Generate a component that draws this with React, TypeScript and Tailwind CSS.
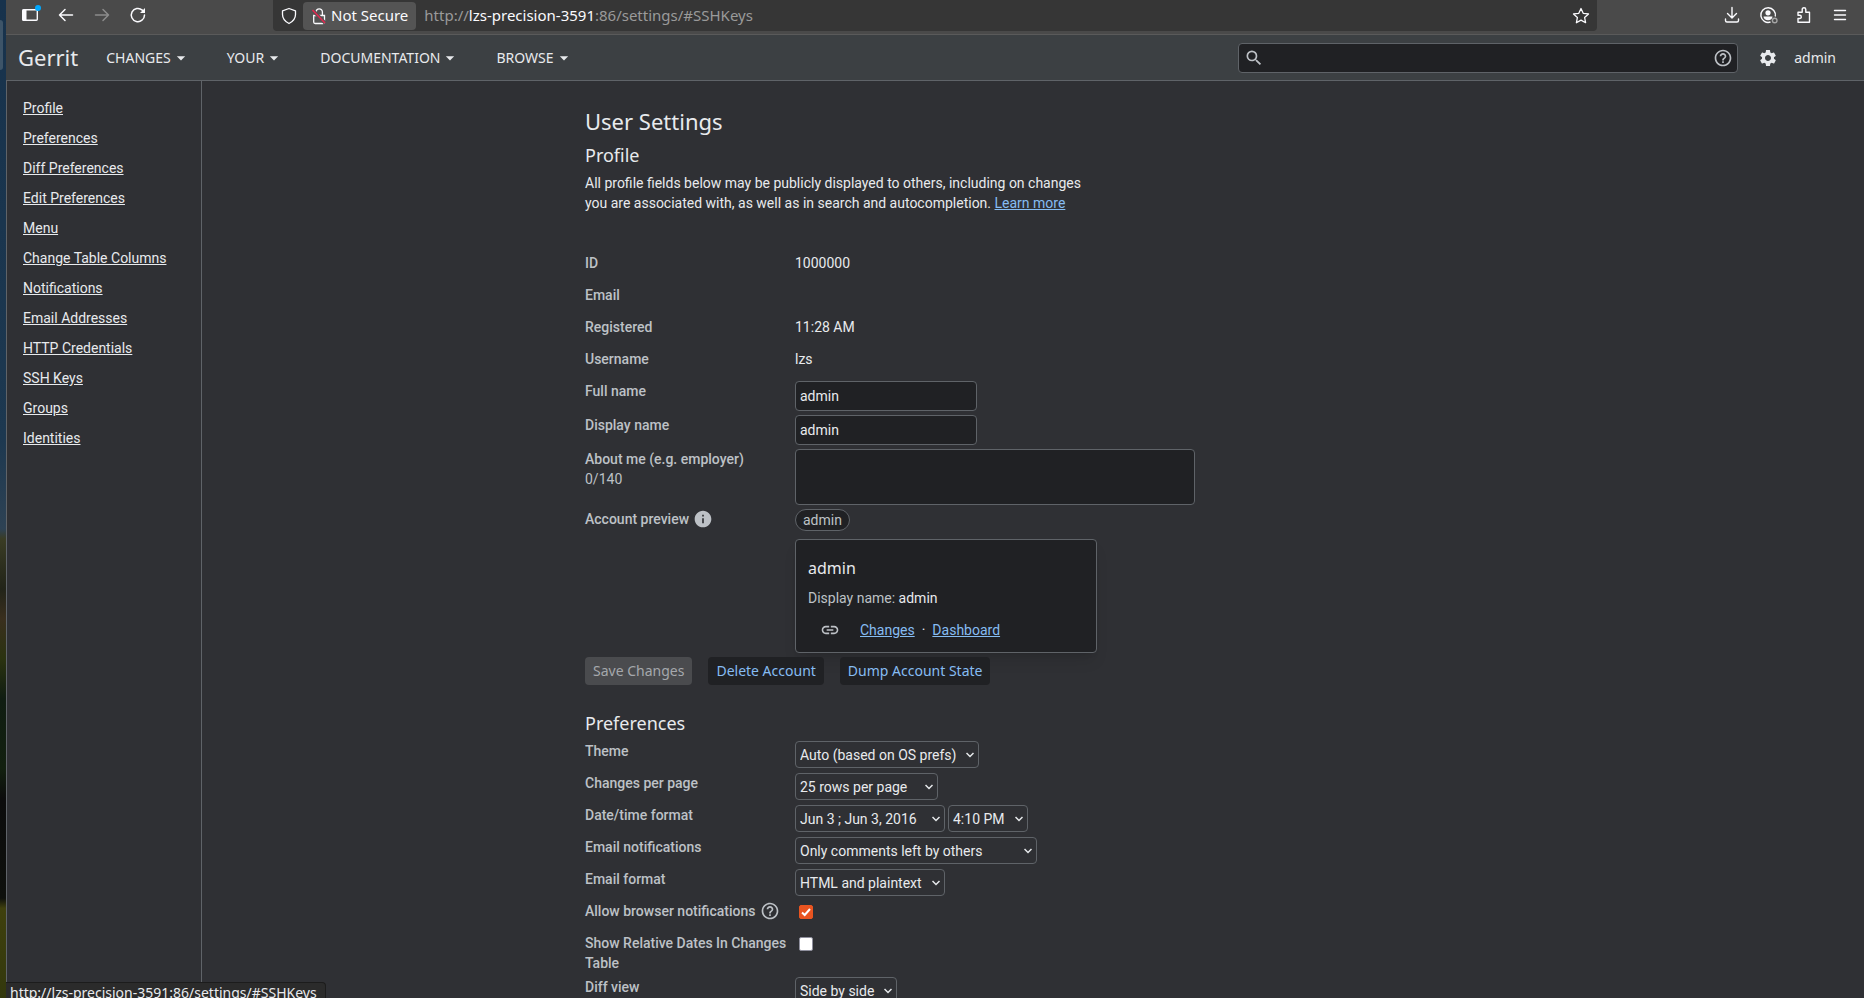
import type { ReactNode } from 'react';
import { MdArrowDropDown, MdHelpOutline, MdInfo, MdLink, MdSearch, MdSettings } from 'react-icons/md';

const SIDEBAR_LINKS = [
  'Profile',
  'Preferences',
  'Diff Preferences',
  'Edit Preferences',
  'Menu',
  'Change Table Columns',
  'Notifications',
  'Email Addresses',
  'HTTP Credentials',
  'SSH Keys',
  'Groups',
  'Identities'
];

const MENUS = ['CHANGES', 'YOUR', 'DOCUMENTATION', 'BROWSE'];

function BrowserBar() {
  return (
    <div className="flex h-[35px] items-start border-b border-[#5a5a5a] bg-[#4a4a4a] font-['Noto_Sans',sans-serif] text-[#fbfbfe]">
      <div className="flex h-[30px] w-[267px] items-center gap-3 pl-3">
        <button type="button" aria-label="Sidebar" className="relative h-6 w-6">
          <svg className="h-6 w-6" viewBox="0 0 24 24" fill="none" stroke="currentColor" strokeWidth="1.4">
            <rect x="4.700" y="6.700" width="14.600" height="10.600" rx="1" />
            <path d="M4.500 6.500h4v11h-4z" fill="currentColor" stroke="none" />
          </svg>
          <span className="absolute top-[2px] right-[1px] h-[6px] w-[6px] rounded-full bg-[#00a8ff]" />
        </button>
        <button type="button" aria-label="Back">
          <svg className="h-6 w-6" viewBox="0 0 24 24" fill="none" stroke="currentColor" strokeWidth="1.5" strokeLinecap="round" strokeLinejoin="round">
            <path d="M18.500 12H5.500M11 6.500L5.500 12l5.500 5.500" />
          </svg>
        </button>
        <button type="button" aria-label="Forward" className="text-[#8c8c8c]">
          <svg className="h-6 w-6" viewBox="0 0 24 24" fill="none" stroke="currentColor" strokeWidth="1.5" strokeLinecap="round" strokeLinejoin="round">
            <path d="M5.500 12h13M13 6.500l5.500 5.500-5.500 5.500" />
          </svg>
        </button>
        <button type="button" aria-label="Reload">
          <svg className="h-6 w-6" viewBox="0 0 24 24" fill="none" stroke="currentColor" strokeWidth="1.5" strokeLinecap="round">
            <path d="M18.500 12a6.600 6.600 0 1 1-2.200-4.900l1.200 1.200" />
            <path d="M19 5v5h-5z" fill="currentColor" stroke="none" />
          </svg>
        </button>
      </div>

      <div className="flex h-[31px] flex-1 items-center rounded-b-sm bg-[#363636] px-1">
        <svg className="h-6 w-6" viewBox="0 0 24 24" fill="none" stroke="currentColor" strokeWidth="1.300" strokeLinejoin="round">
          <path d="M12 4.500l6.500 2.300v3.700c0 4-2.500 7-6.500 9-4-2-6.500-5-6.500-9V6.800z" />
        </svg>
        <button type="button" className="ml-[2px] flex h-7 items-center gap-1 rounded-sm bg-[#545454] px-2 text-[15px]">
          <svg className="h-[18px] w-4" viewBox="0 0 16 18" fill="none" stroke="currentColor" strokeWidth="1.300">
            <path d="M5 8.500V5a3.200 3.200 0 0 1 6.400 0v3.500" />
            <path d="M2.700 8.500h10.800v6.500a1.500 1.500 0 0 1-1.500 1.500H4.200a1.500 1.500 0 0 1-1.500-1.500z" />
            <path d="M1.500 3l12.500 13" stroke="#545454" strokeWidth="3.500" />
            <path d="M1.500 3l12.500 13" stroke="#e22850" strokeWidth="1.600" />
          </svg>
          Not Secure
        </button>
        <p className="ml-2 flex-1 text-[15px] text-[#9a9a9a]">
          http://<span className="text-[#fbfbfe]">lzs-precision-3591</span>:86/settings/#SSHKeys
        </p>
        <button type="button" aria-label="Bookmark">
          <svg className="h-6 w-6" viewBox="0 0 24 24" fill="none" stroke="currentColor" strokeWidth="1.300" strokeLinejoin="round">
            <path d="M12 4.500l2.200 4.800 5.300.6-3.900 3.600 1 5.200-4.600-2.600-4.600 2.600 1-5.200-3.900-3.600 5.300-.6z" />
          </svg>
        </button>
      </div>

      <div className="flex h-[30px] w-[267px] items-center justify-end gap-3 pr-3">
        <button type="button" aria-label="Downloads">
          <svg className="h-6 w-6" viewBox="0 0 24 24" fill="none" stroke="currentColor" strokeWidth="1.400" strokeLinecap="round" strokeLinejoin="round">
            <path d="M12 4.500v10M7.500 10.500l4.500 4.500 4.500-4.500M5.500 16v1.500a1.500 1.500 0 0 0 1.500 1.500h10a1.500 1.500 0 0 0 1.500-1.500V16" />
          </svg>
        </button>
        <button type="button" aria-label="Account">
          <svg className="h-6 w-6" viewBox="0 0 24 24" fill="none" stroke="currentColor" strokeWidth="1.400">
            <path d="M14.500 19A7.300 7.300 0 1 1 19.300 13.500" />
            <circle cx="12" cy="9.800" r="2.600" fill="currentColor" stroke="none" />
            <path d="M7.500 13.500h9c0 2.300-2 3.700-4.500 3.700s-4.500-1.400-4.500-3.700z" fill="currentColor" stroke="none" />
            <circle cx="18.700" cy="17.500" r="2.300" stroke="#a5a5a5" />
          </svg>
        </button>
        <button type="button" aria-label="Extensions">
          <svg className="h-6 w-6" viewBox="0 0 24 24" fill="none" stroke="currentColor" strokeWidth="1.400" strokeLinejoin="round">
            <path d="M6 9.300h4.200V6.500a1.800 1.800 0 0 1 3.600 0v2.800h3.700v9.900H6v-3.700h1.700a1.600 1.600 0 0 0 0-3.200H6z" />
          </svg>
        </button>
        <button type="button" aria-label="Application menu">
          <svg className="h-6 w-6" viewBox="0 0 24 24" fill="none" stroke="currentColor" strokeWidth="1.400" strokeLinecap="round">
            <path d="M6.500 7.500h11M6.500 12h11M6.500 16.500h11" />
          </svg>
        </button>
      </div>
    </div>
  );
}

function GerritHeader() {
  return (
    <header className="flex h-[46px] items-center border-b border-[#5f6368] bg-[#3c4043] pr-7 pl-3 font-['Noto_Sans',sans-serif] text-sm">
      <a href="#home" className="mr-7 text-[22px]">
        Gerrit
      </a>
      <nav className="flex gap-9">
        {MENUS.map((menu) => (
          <button key={menu} type="button" className="flex items-center">
            {menu}
            <MdArrowDropDown className="h-5 w-5" />
          </button>
        ))}
      </nav>
      <div className="ml-auto flex h-[30px] w-[500px] items-center rounded-sm border border-[#5f6368] bg-[#202124] pr-1 pl-[5px] text-[#bdc1c6]">
        <MdSearch className="h-5 w-5" />
        <input aria-label="Search" className="min-w-0 flex-1 bg-transparent px-1 outline-none" />
        <MdHelpOutline className="h-5 w-5" />
      </div>
      <a href="#settings" aria-label="Settings" className="ml-5">
        <MdSettings className="h-5 w-5" />
      </a>
      <button type="button" className="ml-4">
        admin
      </button>
    </header>
  );
}

function Row({ label, htmlFor, children }: { label: ReactNode; htmlFor?: string; children?: ReactNode }) {
  return (
    <div className="mb-1 flex min-h-7 items-start">
      <label htmlFor={htmlFor} className="w-[210px] shrink-0 pr-1 font-medium text-[#bdc1c6]">
        {label}
      </label>
      {children}
    </div>
  );
}

function Select({ id, label, value, className }: { id?: string; label?: string; value: string; className: string }) {
  return (
    <div className={`relative ${className}`}>
      <select
        id={id}
        aria-label={label}
        className="block h-[27px] w-full appearance-none rounded-sm border border-[#5f6368] bg-transparent pl-1 outline-none"
      >
        <option>{value}</option>
      </select>
      <svg className="pointer-events-none absolute top-[10px] right-[5px] h-2 w-2" viewBox="0 0 8 8" fill="none" stroke="currentColor" strokeWidth="1.500">
        <path d="M.5 2L4 5.500 7.500 2" />
      </svg>
    </div>
  );
}

const fieldClass = 'h-[30px] w-[182px] rounded-sm border border-[#5f6368] bg-[#202124] px-1 outline-none';
const linkClass = 'text-[#86bcf2] underline';
const buttonClass = "h-7 rounded-sm px-2 font-['Noto_Sans',sans-serif]";

function ProfileSection() {
  return (
    <section>
      <h2 className="mb-1 font-['Noto_Sans',sans-serif] text-lg leading-7">Profile</h2>
      <p className="mb-10 max-w-[500px]">
        All profile fields below may be publicly displayed to others, including on changes you are associated with, as
        well as in search and autocompletion.{' '}
        <a href="#learn-more" className={linkClass}>
          Learn more
        </a>
      </p>
      <Row label="ID">1000000</Row>
      <Row label="Email" />
      <Row label="Registered">11:28 AM</Row>
      <Row label="Username">lzs</Row>
      <Row label="Full name" htmlFor="full-name">
        <input id="full-name" defaultValue="admin" className={fieldClass} />
      </Row>
      <Row label="Display name" htmlFor="display-name">
        <input id="display-name" defaultValue="admin" className={fieldClass} />
      </Row>
      <Row
        htmlFor="about-me"
        label={
          <>
            About me (e.g. employer)
            <span className="block font-normal">0/140</span>
          </>
        }
      >
        <textarea
          id="about-me"
          className="h-14 w-[400px] resize-none rounded-sm border border-[#5f6368] bg-[#202124] px-1 outline-none"
        />
      </Row>
      <Row
        label={
          <span className="flex items-center gap-1">
            Account preview <MdInfo className="h-5 w-5" />
          </span>
        }
      >
        <div>
          <span className="mb-2 flex h-[22px] w-fit items-center rounded-full border border-[#5f6368] bg-[#202124] px-[7px] text-[#bdc1c6]">
            admin
          </span>
          <div className="h-[114px] w-[302px] rounded-sm border border-[#5f6368] bg-[#202124] px-3 pt-4 shadow-lg">
            <h3 className="font-['Noto_Sans',sans-serif] text-base">admin</h3>
            <p className="mt-2">
              <span className="text-[#bdc1c6]">Display name:</span> admin
            </p>
            <p className="mt-3 flex items-center pl-3">
              <MdLink className="mr-5 h-5 w-5 text-[#bdc1c6]" />
              <a href="#changes" className={linkClass}>
                Changes
              </a>
              <span className="mx-[7px]">·</span>
              <a href="#dashboard" className={linkClass}>
                Dashboard
              </a>
            </p>
          </div>
        </div>
      </Row>
      <div className="flex gap-4">
        <button type="button" disabled className={`${buttonClass} bg-[#4a4b4e] text-[#a5a8ac]`}>
          Save Changes
        </button>
        <button type="button" className={`${buttonClass} bg-[#202124] text-[#86bcf2]`}>
          Delete Account
        </button>
        <button type="button" className={`${buttonClass} bg-[#202124] text-[#86bcf2]`}>
          Dump Account State
        </button>
      </div>
    </section>
  );
}

function PreferencesSection() {
  return (
    <section className="mt-6">
      <h2 className="mb-1 font-['Noto_Sans',sans-serif] text-lg leading-7">Preferences</h2>
      <Row label="Theme" htmlFor="theme">
        <Select id="theme" value="Auto (based on OS prefs)" className="w-[184px]" />
      </Row>
      <Row label="Changes per page" htmlFor="per-page">
        <Select id="per-page" value="25 rows per page" className="w-[143px]" />
      </Row>
      <Row label="Date/time format" htmlFor="date-format">
        <div className="flex gap-[3px]">
          <Select id="date-format" value="Jun 3 ; Jun 3, 2016" className="w-[150px]" />
          <Select label="Time format" value="4:10 PM" className="w-20" />
        </div>
      </Row>
      <Row label="Email notifications" htmlFor="email-notifications">
        <Select id="email-notifications" value="Only comments left by others" className="w-[242px]" />
      </Row>
      <Row label="Email format" htmlFor="email-format">
        <Select id="email-format" value="HTML and plaintext" className="w-[150px]" />
      </Row>
      <Row
        htmlFor="browser-notifications"
        label={
          <span className="flex items-center gap-1">
            Allow browser notifications <MdHelpOutline className="h-5 w-5" />
          </span>
        }
      >
        <Checkbox id="browser-notifications" defaultChecked />
      </Row>
      <Row label="Show Relative Dates In Changes Table" htmlFor="relative-dates">
        <Checkbox id="relative-dates" />
      </Row>
      <Row label="Diff view" htmlFor="diff-view">
        <Select id="diff-view" value="Side by side" className="w-[102px]" />
      </Row>
    </section>
  );
}

function Checkbox({ id, defaultChecked }: { id: string; defaultChecked?: boolean }) {
  return (
    <span className="relative mt-1 ml-1 h-[14px] w-[14px]">
      <input
        id={id}
        type="checkbox"
        defaultChecked={defaultChecked}
        className="peer block h-[14px] w-[14px] appearance-none rounded-xs border border-[#8f8f9d] bg-white checked:border-[#e95420] checked:bg-[#e95420]"
      />
      <svg className="pointer-events-none absolute inset-0 hidden h-[14px] w-[14px] peer-checked:block" viewBox="0 0 14 14" fill="none" stroke="white" strokeWidth="2">
        <path d="M3 7.500l2.700 2.500L11 4" />
      </svg>
    </span>
  );
}

export default function App() {
  return (
    <div className="flex h-screen overflow-hidden bg-[#2f3034] font-[Roboto,sans-serif] text-sm text-[#e8eaed]">
      {/* Desktop wallpaper showing beside the window */}
      <div className="w-[6px] shrink-0 bg-[linear-gradient(to_bottom,#17324c_0%,#1d3850_44%,#2e4254_53%,#3a3c24_54%,#222419_59%,#3a2f1e_62%,#2b3310_66%,#101d12_70%,#12200f_77%,#0c0c0c_80%,#0e100c_90%,#3f400d_91%,#33380d_100%)] pt-5">
        <div className="h-[50px] w-[3px] rounded-r-sm bg-[#3d5468]" />
      </div>
      <div className="flex min-w-0 flex-1 flex-col">
        <BrowserBar />
        <GerritHeader />
        <div className="flex min-h-0 flex-1 border-l border-[#5f6368]">
          <nav className="w-[195px] shrink-0 border-r border-[#5f6368] pt-3 pl-4">
            <ul>
              {SIDEBAR_LINKS.map((link) => (
                <li key={link} className="py-[5px]">
                  <a href={`#${link.replaceAll(' ', '')}`} className="underline">
                    {link}
                  </a>
                </li>
              ))}
            </ul>
          </nav>
          <main className="min-w-0 flex-1 overflow-hidden pt-6">
            <div className="mx-auto max-w-[896px]">
              <h1 className="mb-1 font-['Noto_Sans',sans-serif] text-[22px] leading-8">User Settings</h1>
              <ProfileSection />
              <PreferencesSection />
            </div>
          </main>
        </div>
      </div>
      {/* Link status bubble */}
      <div className="absolute bottom-0 left-[6px] h-4 overflow-hidden rounded-tr-sm border-t border-r border-[#1c1c1c] bg-[#2b2b2b] pr-2 pl-1 font-['Noto_Sans',sans-serif]">
        http://lzs-precision-3591:86/settings/#SSHKeys
      </div>
    </div>
  );
}
